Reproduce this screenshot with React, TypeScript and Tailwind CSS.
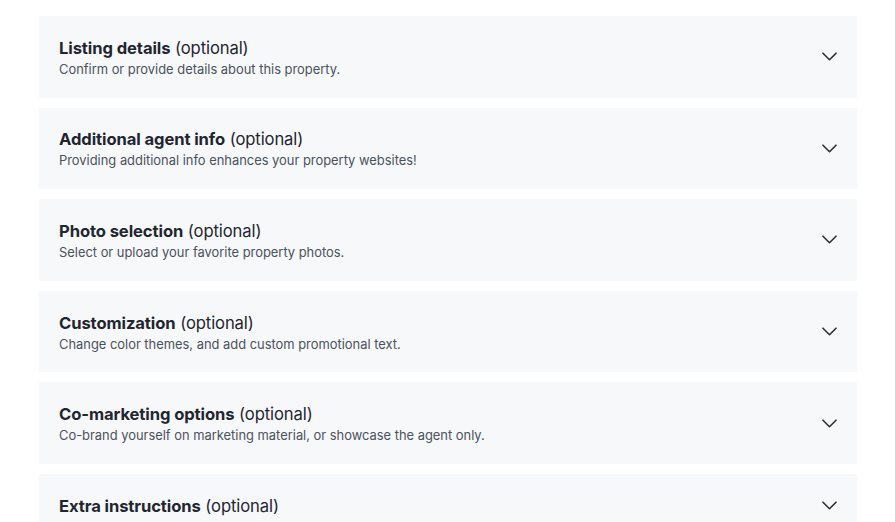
import React from 'react';

type Section = { title: string; subtitle?: string };

const sections: Section[] = [
  { title: 'Listing details', subtitle: 'Confirm or provide details about this property.' },
  { title: 'Additional agent info', subtitle: 'Providing additional info enhances your property websites!' },
  { title: 'Photo selection', subtitle: 'Select or upload your favorite property photos.' },
  { title: 'Customization', subtitle: 'Change color themes, and add custom promotional text.' },
  { title: 'Co-marketing options', subtitle: 'Co-brand yourself on marketing material, or showcase the agent only.' },
  { title: 'Extra instructions' },
];

function Chevron() {
  return (
    <svg width="15" height="9" viewBox="0 0 15 9" fill="none" className="shrink-0">
      <path d="M1 1.2l6.5 6.5 6.5-6.5" stroke="#2a2f37" strokeWidth="1.6" strokeLinecap="round" strokeLinejoin="round" />
    </svg>
  );
}

export default function App() {
  return (
    <div className="h-[522px] overflow-hidden bg-white px-[39px] pt-4 font-['Inter','Liberation_Sans',sans-serif]">
      <div className="flex w-[818px] flex-col gap-[10px]">
        {sections.map((s) => (
          <button
            key={s.title}
            className="flex w-full items-center justify-between bg-[#f7f8fa] py-[19.8px] pl-5 pr-[20px] text-left"
          >
            <div className="flex flex-col pt-[1px]">
              <div className="text-[16.6px] leading-[22px] tracking-[-0.1px] text-[#1f2630]">
                <span className="font-bold">{s.title}</span> <span className="font-normal">(optional)</span>
              </div>
              {s.subtitle && (
                <div className="mt-[2px] text-[12.9px] leading-[17px] text-[#4b525c]">{s.subtitle}</div>
              )}
            </div>
            <Chevron />
          </button>
        ))}
      </div>
    </div>
  );
}
